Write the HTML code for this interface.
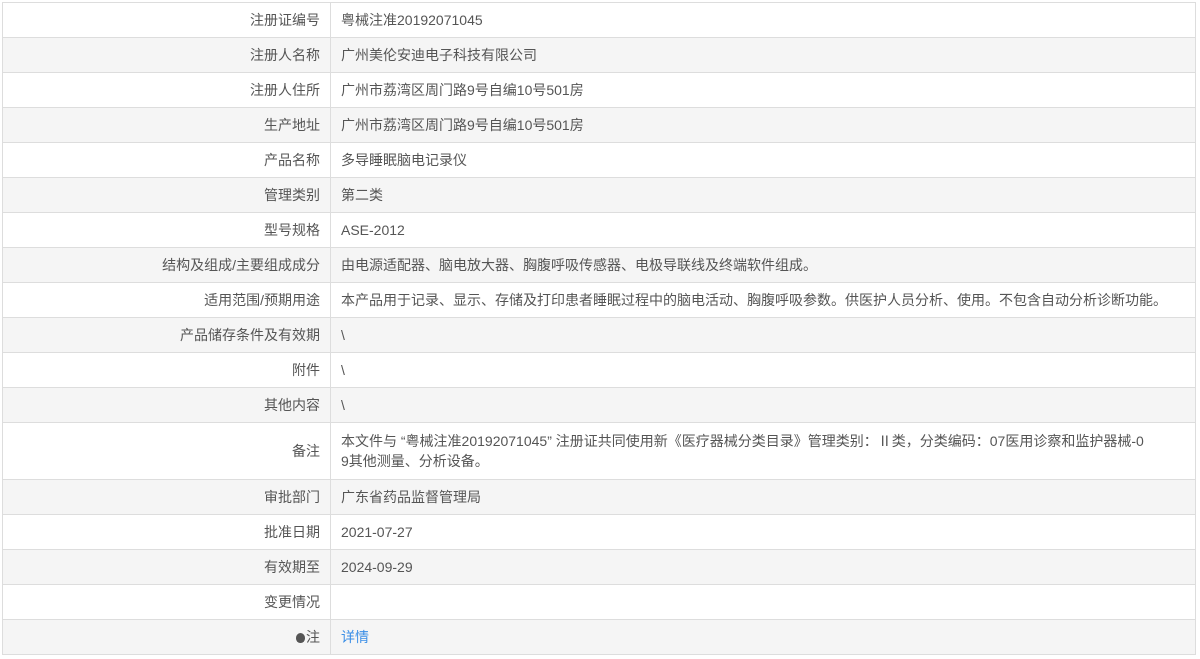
<!DOCTYPE html>
<html><head><meta charset="utf-8"><style>
body{margin:0;background:#fff;font-family:"Liberation Sans","Noto Sans CJK SC",sans-serif;font-size:14px;color:#555;}
table{position:absolute;left:2px;top:2px;width:1194px;border-collapse:collapse;}
td{border:1px solid #ddd;height:34px;padding:0 10px;line-height:20px;}
td.l{width:307px;text-align:right;}
tr:nth-child(even) td{background:#f5f5f5;}
tr.t td{height:56px;}
a{color:#3a8ee6;text-decoration:none;}
.b{display:inline-block;width:9px;height:10px;background:#555;border-radius:50% 50% 45% 45%;vertical-align:-1px;margin-right:1px;}
</style></head><body>
<table>
<tr><td class="l">注册证编号</td><td>粤械注准20192071045</td></tr>
<tr><td class="l">注册人名称</td><td>广州美伦安迪电子科技有限公司</td></tr>
<tr><td class="l">注册人住所</td><td>广州市荔湾区周门路9号自编10号501房</td></tr>
<tr><td class="l">生产地址</td><td>广州市荔湾区周门路9号自编10号501房</td></tr>
<tr><td class="l">产品名称</td><td>多导睡眠脑电记录仪</td></tr>
<tr><td class="l">管理类别</td><td>第二类</td></tr>
<tr><td class="l">型号规格</td><td>ASE-2012</td></tr>
<tr><td class="l">结构及组成/主要组成成分</td><td>由电源适配器、脑电放大器、胸腹呼吸传感器、电极导联线及终端软件组成。</td></tr>
<tr><td class="l">适用范围/预期用途</td><td>本产品用于记录、显示、存储及打印患者睡眠过程中的脑电活动、胸腹呼吸参数。供医护人员分析、使用。不包含自动分析诊断功能。</td></tr>
<tr><td class="l">产品储存条件及有效期</td><td>\</td></tr>
<tr><td class="l">附件</td><td>\</td></tr>
<tr><td class="l">其他内容</td><td>\</td></tr>
<tr class="t"><td class="l">备注</td><td>本文件与 “粤械注准20192071045” 注册证共同使用新《医疗器械分类目录》管理类别：Ⅱ类，分类编码：07医用诊察和监护器械-0<br>9其他测量、分析设备。</td></tr>
<tr><td class="l">审批部门</td><td>广东省药品监督管理局</td></tr>
<tr><td class="l">批准日期</td><td>2021-07-27</td></tr>
<tr><td class="l">有效期至</td><td>2024-09-29</td></tr>
<tr><td class="l">变更情况</td><td></td></tr>
<tr><td class="l"><span class="b"></span>注</td><td><a>详情</a></td></tr>
</table>
</body></html>
